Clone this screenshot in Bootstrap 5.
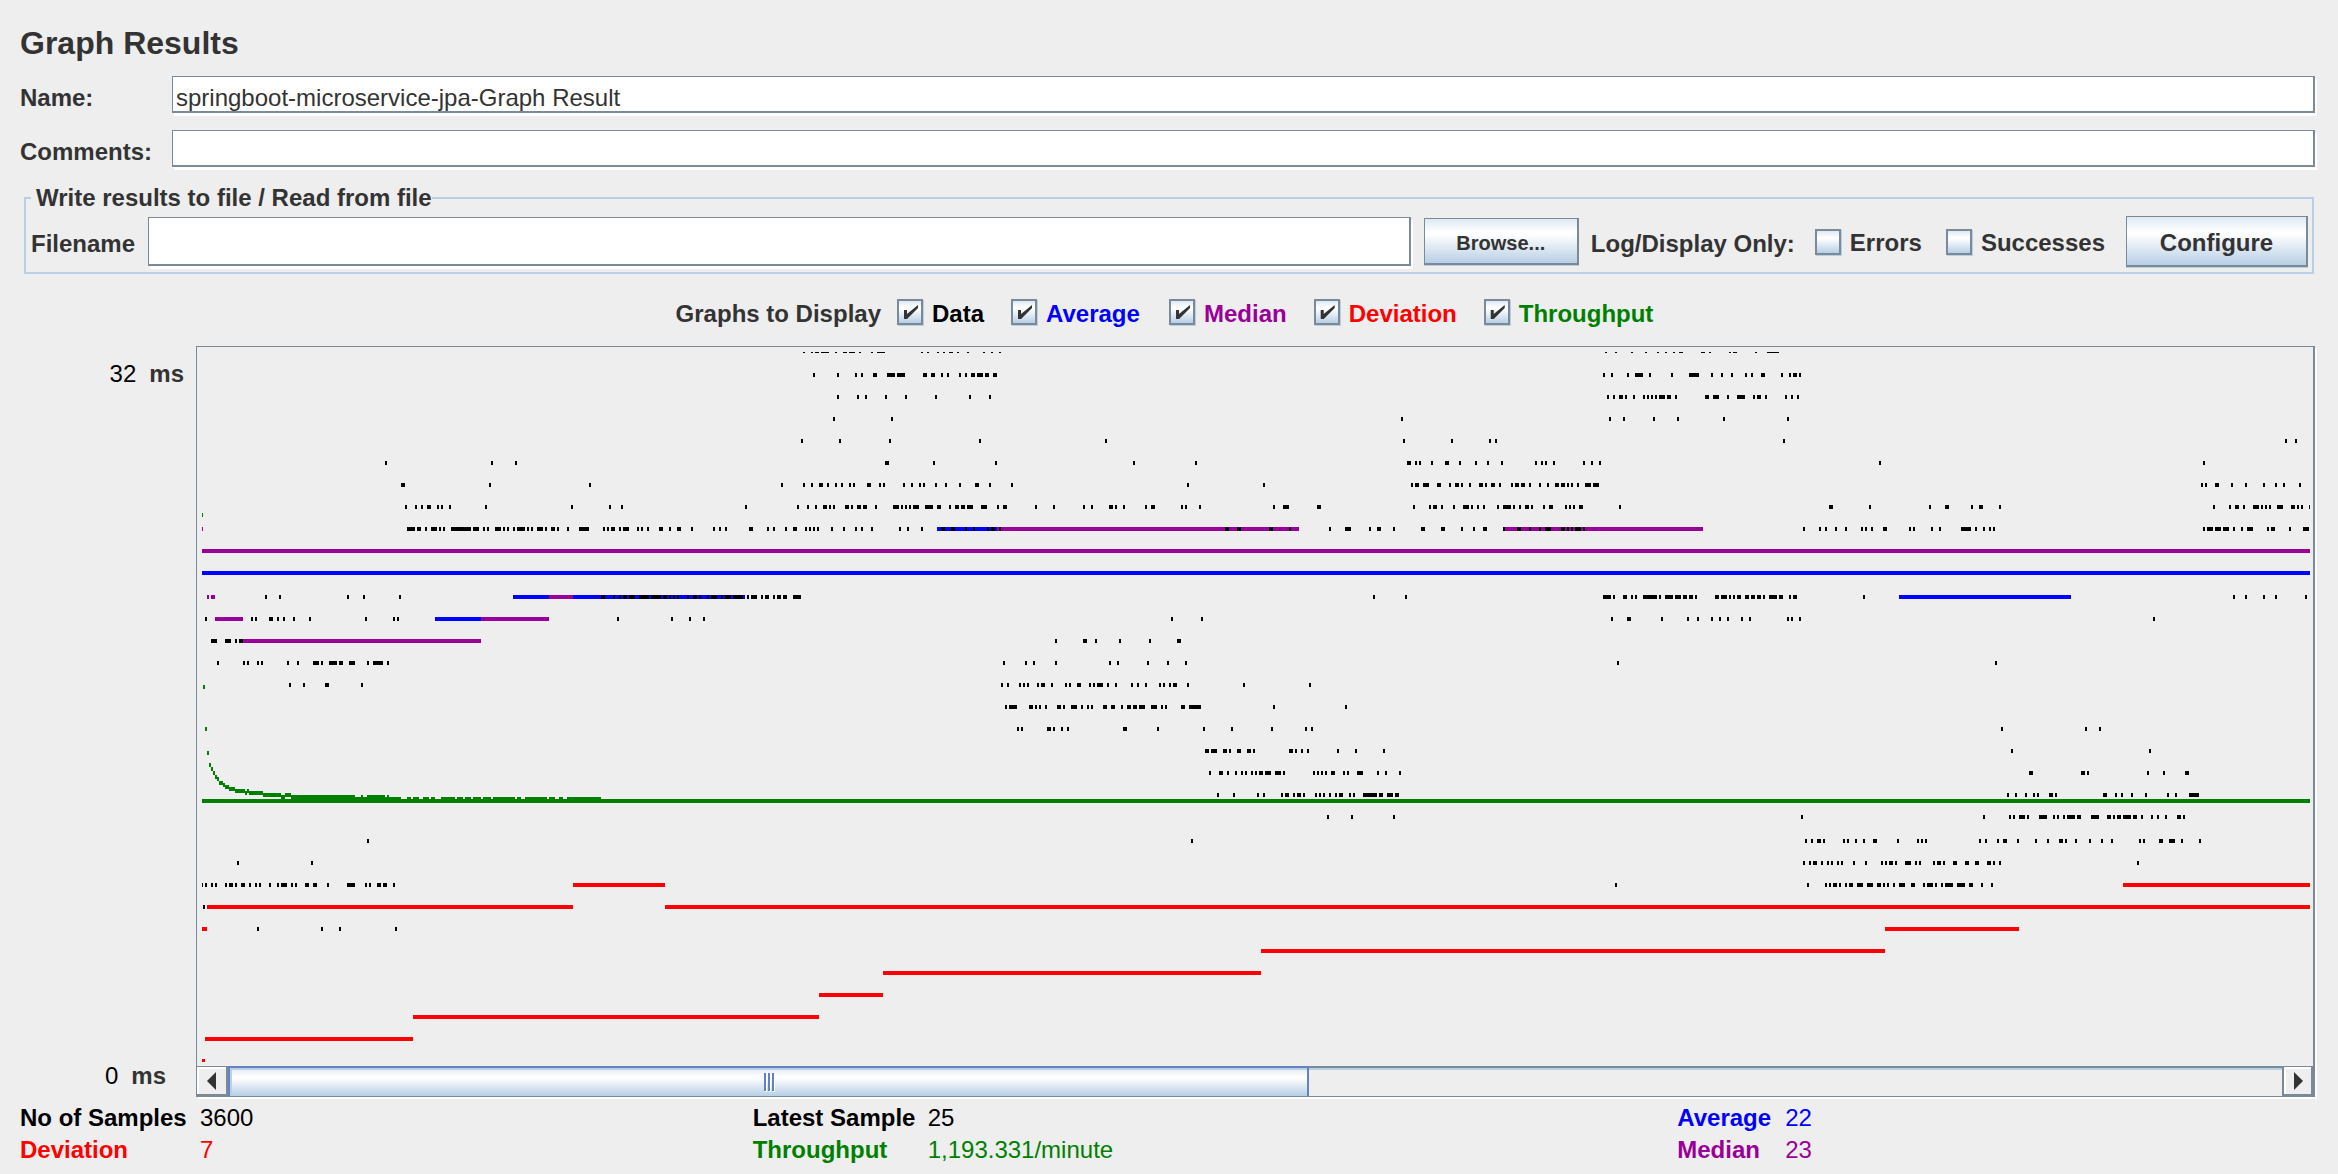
<!DOCTYPE html>
<html lang="en">
<head>
<meta charset="utf-8">
<meta name="viewport" content="width=device-width, initial-scale=1">
<title>Graph Results</title>
<link href="https://cdn.jsdelivr.net/npm/bootstrap@5.3.0/dist/css/bootstrap.min.css" rel="stylesheet">
<style>
:root { --edge: #7a8a99; --focus: #b8cfe5; --metal: linear-gradient(#dde8f3, #fff 30%, #fff 35%, #b8cfe5); }
body { background: #eee; color: #333; font: 24px/28px "Liberation Sans", Arial, sans-serif; padding: 24px 21px 8px 20px; }
.panel-title { font-size: 32px; line-height: 38px; font-weight: 700; margin: 0 0 14px; }
.row-label { width: 152px; font-weight: 700; }
.swing-field { border: 1px solid var(--edge); border-width: 1px 2px 2px 1px; border-radius: 0; box-shadow: 2px 3px 0 #fff; background: #fff; color: #333; font-size: 24px; line-height: 28px; height: 37px; padding: 7px 3px 0; min-width: 0; outline: 0; }
.field-row { margin: 0 2px 17px 0; }
.file-group { border: 2px solid var(--focus); margin: 0 3px 0 4px; padding: 4px 4px 5px 5px; }
.file-group legend { float: none; width: auto; font-size: 24px; line-height: 28px; font-weight: 700; margin: 0; padding: 0 0 0 5px; }
.file-group .swing-field { height: 49px; padding-top: 0; }
.file-label { margin-right: 13px; padding-top: 5px; }
.swing-btn { border: 1px solid var(--edge); border-width: 1px 2px 2px 1px; border-radius: 0; background: var(--metal); box-shadow: 0 1px 0 var(--focus); color: #333; font-weight: 700; padding: 3px 0 0; }
.browse-btn { width: 155px; height: 47px; font-size: 20px; margin-left: 13px; }
.config-btn { width: 182px; height: 51px; font-size: 24px; margin-left: 21px; }
.tick { appearance: none; width: 26px; height: 26px; margin: 0 0 3px; border: 2px solid var(--edge); background: var(--metal); box-shadow: 1px 1px 0 var(--focus); flex: none; }
.tick:checked::before { content: ""; display: block; width: 22px; height: 22px; background: #333; clip-path: polygon(5px 9px, 8px 9px, 8px 13px, 19px 4px, 19px 7px, 8px 18px, 5px 18px); }
.tick-label { gap: 9px; padding-top: 3px; }
.first-tick { margin-left: 20px; }
.series-bar { margin: 24px 8px 20px 0; gap: 27px; height: 28px; }
.series-bar .c-avg { min-width: 131px; }
.c-data { color: #000; } .c-avg { color: #00f; } .c-med { color: #909; } .c-dev { color: #f00; } .c-thr { color: #008000; }
.y-axis { width: 176px; padding: 14px 12px 7px 0; }
.y-axis .zero { padding-right: 18px; }
.y-axis div { gap: 13px; }
.plot-box { border: 1px solid var(--edge); border-right-width: 2px; box-shadow: 2px 2px 0 #fff; min-width: 0; margin-right: 2px; }
.plot-view { padding: 5px 3px 0 5px; }
.plot-area { display: block; width: 100%; height: 710px; overflow: hidden; }
.scroll-line { height: 30px; margin: 4px 0 0; border-top: 2px solid var(--edge); background: linear-gradient(#b8cfe5 2px, #eee 2px); }
.arrow-btn { width: 31px; padding: 0; border: 1px solid var(--edge); border-width: 0 2px 2px 0; background: #eee; box-shadow: inset 2px 2px 0 #fff; margin-top: -1px; }
.arrow-right { border-left-width: 2px; }
.arrow-btn svg { display: block; margin: auto; }
.thumb { width: 51.1%; margin-top: -2px; border: 2px solid #6382bf; border-width: 2px 2px 0; background: var(--metal); box-shadow: inset 2px 2px 0 #b8cfe5; gap: 2px; }
.thumb i { width: 2px; height: 18px; background: #6382bf; box-shadow: 1px 1px 0 #fff; }
.stats-grid { display: grid; grid-template-columns: 733fr 925fr 640fr; line-height: 32px; margin-top: 5px; }
.stats-grid dl { display: grid; margin: 0; }
.stats-grid dd, .stats-grid dt { margin: 0; white-space: nowrap; }
.dl-a { grid-template-columns: 180px 1fr; } .dl-b { grid-template-columns: 175px 1fr; } .dl-c { grid-template-columns: 108px 1fr; }
</style>
</head>
<body>
<h1 class="panel-title">Graph Results</h1>
<form>
  <div class="field-row d-flex align-items-baseline">
    <label class="row-label" for="name">Name:</label>
    <input class="swing-field flex-grow-1" id="name" type="text" value="springboot-microservice-jpa-Graph Result">
  </div>
  <div class="field-row d-flex align-items-baseline">
    <label class="row-label" for="comments">Comments:</label>
    <input class="swing-field flex-grow-1" id="comments" type="text">
  </div>
  <fieldset class="file-group">
    <legend>Write results to file / Read from file</legend>
    <div class="d-flex align-items-center fw-bold">
      <label class="file-label" for="filename">Filename</label>
      <input class="swing-field flex-grow-1" id="filename" type="text">
      <button class="swing-btn browse-btn" type="button">Browse...</button>
      <span class="ms-2 ps-1 pt-1">Log/Display Only:</span>
      <label class="tick-label first-tick d-flex align-items-center"><input class="tick" type="checkbox">Errors</label>
      <label class="tick-label d-flex align-items-center ms-4"><input class="tick" type="checkbox">Successes</label>
      <button class="swing-btn config-btn" type="button">Configure</button>
    </div>
  </fieldset>
  <div class="series-bar d-flex justify-content-center align-items-center fw-bold">
    <div class="d-flex align-items-center">
      <span class="me-3 pt-1">Graphs to Display</span>
      <label class="tick-label c-data d-flex align-items-center"><input class="tick" type="checkbox" checked>Data</label>
    </div>
    <label class="tick-label c-avg d-flex align-items-center"><input class="tick" type="checkbox" checked>Average</label>
    <label class="tick-label c-med d-flex align-items-center"><input class="tick" type="checkbox" checked>Median</label>
    <label class="tick-label c-dev d-flex align-items-center"><input class="tick" type="checkbox" checked>Deviation</label>
    <label class="tick-label c-thr d-flex align-items-center"><input class="tick" type="checkbox" checked>Throughput</label>
  </div>
</form>
<main class="d-flex">
  <div class="y-axis d-flex flex-column justify-content-between flex-shrink-0">
    <div class="d-flex justify-content-end"><span class="c-data">32</span><b>ms</b></div>
    <div class="zero d-flex justify-content-end"><span class="c-data">0</span><b>ms</b></div>
  </div>
  <div class="plot-box flex-grow-1">
    <div class="plot-view">
      <svg class="plot-area" id="plot" viewBox="202 352 2108 710" preserveAspectRatio="none" shape-rendering="crispEdges" role="img" aria-label="Response time graph"></svg>
    </div>
    <div class="scroll-line d-flex">
      <button class="arrow-btn" type="button" aria-label="Scroll left"><svg width="10" height="18"><path d="M9 0v18L0 9z" fill="#333"/></svg></button>
      <div class="thumb d-flex justify-content-center align-items-center"><i></i><i></i><i></i></div>
      <button class="arrow-btn arrow-right ms-auto" type="button" aria-label="Scroll right"><svg width="10" height="18"><path d="M1 0v18L10 9z" fill="#333"/></svg></button>
    </div>
  </div>
</main>
<footer class="stats-grid">
  <dl class="dl-a"><dt class="c-data">No of Samples</dt><dd class="c-data">3600</dd><dt class="c-dev">Deviation</dt><dd class="c-dev">7</dd></dl>
  <dl class="dl-b"><dt class="c-data">Latest Sample</dt><dd class="c-data">25</dd><dt class="c-thr">Throughput</dt><dd class="c-thr">1,193.331/minute</dd></dl>
  <dl class="dl-c"><dt class="c-avg">Average</dt><dd class="c-avg">22</dd><dt class="c-med">Median</dt><dd class="c-med">23</dd></dl>
</footer>
<script src="https://cdn.jsdelivr.net/npm/bootstrap@5.3.0/dist/js/bootstrap.bundle.min.js"></script>
<script>
// Each trace is a list of [y, marks]. A letter picks the section of the time axis
// (its origin and scale), a number is one sample there and "a-b" is a run of samples.
const sections = { X: [0, 1], A: [180, 2.45], B: [780, 2.45], C: [1380, 3], D: [1780, 2.81], E: [980, 3] };
const traces = [
  ['#00f', [
    [527, 'B 385-532'], [571, 'X 201-2313'], [595, 'A 816-1384 D 334-818'], [617, 'A 625-737']]],
  ['#909', [
    [527, 'A 51 B 532-1272 C 372-969'], [549, 'X 201-2313'], [595, 'A 66 76-86 904-963'],
    [617, 'A 86-154 737-904'], [639, 'A 154-737']]],
  ['#f00', [
    [883, 'A 963-1188 D 964-1495'], [905, 'A 66-963 1188-5225'], [927, 'A 51-66 D 295-672'],
    [949, 'X 1261-1885'], [971, 'X 883-1261'], [993, 'X 819-883'], [1015, 'A 571-1566'], [1037, 'A 61-571'], [1059, 'A 51-61']]],
  ['#000', [
    [349, 'B 56 77 86-96 100-120 135 154-164 169-184 194 223 238-257 345 360 385 399 414-424 434 458 497 517 537 C 675 705 753 795 831 855 879 897-909 963-975 987 1047 1059-1071 1125 1161-1197'],
    [373, 'B 81 140 184 198 228-238 262-282 287-306 350-360 370-380 394 409 439 453 468-478 483-497 502-512 522-532 C 669 693 741 765-789 807 873 927-957 993 1023 1053 1095 1113 1143-1155 1203 1227 1239-1251 1257'],
    [395, 'B 140 189 208 257 306 380 463 512 C 681 699 717-729 735 759 789 801 813 825 837-855 861-873 885 975-987 999-1017 1041 1071-1095 1119 1131-1143 1155 1215 1233 1251'],
    [417, 'B 130 272 C 63 687 729 819 891 1029 1221'],
    [439, 'B 51 145 267 488 796 C 69 213 327 345 1209 D 1419 1447'],
    [461, 'A 502 762 821 B 257-267 375 527 865 1017 C 81-93 105 117 153 195-207 237 285 321 363 465 483 495 519 609 633 657 D 278 1189'],
    [483, 'A 541-551 757 1002 1472 B 56 76 96-105 115 135 149 169 179 213-223 243 252 301 321 341 350 380 404 439 478-488 512 566 997 1183 C 93 105-117 129-147 171-183 207 225-237 243 267 297-309 315 333-345 357 393 405-417 423-435 447 477 501 525-537 543-555 561 573 591 615-633 639-657 D 1183 1194 1222-1233 1267 1307 1357 1391 1413 1458'],
    [505, 'A 551 576 590 605-615 630 639 659 747 958 1051 1080 1384 B 42 66 86 105-115 120 130 159-169 174 189-198 203-213 233 277-292 296 306 316 326-341 355-375 385-394 414 429-439 443-453 458-473 492-507 532 546-556 625 669 742 762 806-816 821 840 894 909-919 982 992 1027 1208 1232-1247 1316-1325 C 99 147 159-171 183 219 249-267 273 291 309 351 369-393 399 417 435-447 453 489 507-519 555 567 579 597-609 717 1347-1359 1467 D 419 464-475 537 559-570 615 1217 1262 1279-1290 1301 1329-1346 1352 1363 1374 1397-1413 1436-1447 1453 1464 1487'],
    [527, 'A 556-576 581-590 600 615-630 635 644 664-713 718-733 742 752 772-786 791 801 816 826-845 850 860 875-889 894 909-919 924 948 978-1002 1036 1046 1056-1066 1075 1085-1100 1120 1129 1144 1174-1183 1198 1218-1227 1252 1306 1321 1335 1394-1404 1438 1453 B 12 32-42 61 71 81 91 125 154 184 198 223 292 311 345 394-404 419-429 453 473 507 517-527 537 1090-1100 1120-1129 1198-1208 1247 1345 1384-1399 1443 1463-1472 1502 C 39 123-135 183-195 243 279 309-321 369 411-423 447 477 495-513 543-555 561 573 585-603 609 1269 1317 1335 1365 1395 1443 1455 1473 D 289-301 362 374 424 447 509-537 548 570 587 599 1189 1200-1217 1222-1239 1245-1262 1273 1295 1312-1329 1368 1380-1391 1430 1470-1487'],
    [595, 'A 208 243 409 448 537 1031-1041 1061 1075 1085-1095 1100-1115 1125-1149 1154-1178 1183-1193 1198 1208 1217 1242 1257-1267 1271 1291 1301-1316 1325 1335-1350 1355-1380 1389 1399-1414 1423 1433-1443 1453 1463-1472 1477-1487 1502-1521 B 1453 1531 C 669-693 699 729-741 753 765 789-831 837 855-879 885-903 909-921 927-939 945 1005-1017 1023-1041 1047 1059 1071-1083 1095-1107 1113-1125 1131-1143 1149 1167-1191 1197-1209 1227 1239-1251 1449 D 1273 1307 1357 1391 1475'],
    [617, 'A 61 174 184 218-228 238 252 277 316 453 522 532 1071 1203 1247 1281 B 958 1031 C 693 741-753 843 921 951 993 1017 1041 1083 1107 1221 1233 1257 D 1048'],
    [639, 'A 76-91 110-125 135 145-154 B 674 742-752 772 830 904 973-982'],
    [661, 'A 91 154 164 189 198 262 287 326-341 345 365-385 390-399 414-429 458 473-497 507 E 69 135 159 225 387 411 501 561 615 C 711 D 604'],
    [683, 'A 267 301 355-365 443 E 63 81 117 129 141 171 183-195 213 255 267 291-303 327 339 351-369 381 405 453 471 495 537 549 567 579-591 621 789 987'],
    [705, 'E 75 87-111 147-159 165 177 195 231-243 249 273-291 303 321 333 369-381 393-405 423 441-453 459-471 477-495 513-531 543 555 603-615 627-663 879 1095'],
    [727, 'E 111 123 201-213 219 243 261 429-441 531 669 753 873 975 993 D 621 857 896'],
    [749, 'E 675-687 693-711 729-741 747 771-783 801-813 819 927-939 945 963 981 1071 1125 1209 D 649 1037'],
    [771, 'E 687 717-729 741 765 783 795 813 825 837-849 855-873 885-903 909 999 1011 1023 1035 1053-1065 1089 1101 1131-1149 1191 1215 1257 D 700-711 846-857 863 1031 1076 1138-1149'],
    [793, 'E 711 759 831 849 903 915-927 939 951-963 969 1005 1017 1029 1047 1065 1077-1089 1107 1119 1149-1191 1197-1209 1221-1239 1245-1257 D 638 660 688 711 722 756-767 773 908-919 941 958 986 1026 1087 1110 1149-1177'],
    [815, 'E 1041 1113 1239 D 59 570 643 655 672-688 694 728-750 767 778 795 806-829 835-846 874-896 919-930 936 947-958 964-986 992-1003 1014 1043 1059 1082 1116-1127 1132'],
    [839, 'E 633 A 458 D 70 87 104-115 121 177 188 211 233 261-273 329 385 396 407 559 576 610 627-638 666 717 750 784-795 801 829 868 902 930 1009 1020 1065-1076 1093-1110 1127 1177'],
    [861, 'A 140 321 D 65 81 93-104 115 132 143 160 171 205 239 284 295 306-317 323 351-368 379 391 430 441-452 458 486-497 520-531 548-559 582-593 599 615 1003'],
    [883, 'A 51 61 76 86 110 120-130 135 149-159 169 184 194 218 238 247-262 272 282 306-316 326-336 360 409-429 453 463 483-492 497-507 522 X 1615 D 76 126 138 149-160 166 183 194-205 216-233 244-261 273-284 289 301 317 334-351 368-379 402 413-430 436 452 464-486 497-520 531-542 565 593'],
    [905, 'A 56'],
    [927, 'A 189 345 390 527']]],
  ['#008000', [
    [513, 'A 51'], [685, 'A 56'], [727, 'A 61'], [751, 'A 66'], [763, 'A 71'], [767, 'A 76'], [771, 'A 81'], [775, 'A 86'],
    [777, 'A 91'], [781, 'A 96-105'], [783, 'A 105'], [785, 'A 110-120'], [787, 'A 120-135'], [789, 'A 135-159 164'],
    [791, 'A 159 169-203'], [793, 'A 203-247 257-272'], [795, 'A 247-257 272-429 443 458-502 507'],
    [797, 'A 429-541 556-566 571-586 595-610 615-625 639-674 679-693 698-713 718-737 742-762 767-821 826-835 845-899 904-919 929-938 948-1031'],
    [799, 'X 201-2313']]]
];

const plot = document.getElementById('plot');
const slot = (section, value) => {
  const [origin, scale] = sections[section];
  return 203 + 2 * Math.round((origin + value / scale - 203) / 2);
};
for (const [color, rows] of traces) {
  let d = '';
  for (const [y, marks] of rows) {
    let section = 'X';
    for (const token of marks.split(' ')) {
      if (token in sections) { section = token; continue; }
      const [from, to] = token.split('-').map(Number);
      const x = slot(section, from);
      const width = to ? slot(section, to) - x : 2;
      d += `M${x} ${y}h${width}v4h-${width}z`;
    }
  }
  const path = document.createElementNS('http://www.w3.org/2000/svg', 'path');
  path.setAttribute('fill', color);
  path.setAttribute('d', d);
  plot.append(path);
}
</script>
</body>
</html>
